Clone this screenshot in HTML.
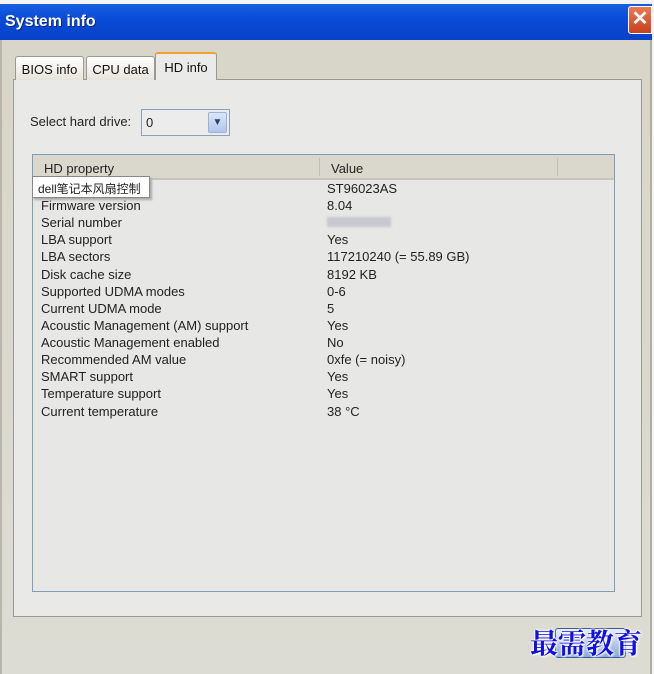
<!DOCTYPE html>
<html><head><style>
*{margin:0;padding:0;box-sizing:border-box}
body{width:654px;height:674px;background:#f4f4f4;font-family:"Liberation Sans","Noto Sans CJK SC",sans-serif;font-size:13px;color:#222;position:relative;overflow:hidden}
.win{position:absolute;left:0;top:4px;width:652px;height:670px;background:linear-gradient(#d8d5c7,#dddcd4);border-left:2px solid #b8b6ac;border-right:2px solid #b0aea4}
.a{position:absolute}
.title{left:0;top:4px;width:652px;height:36px;background:linear-gradient(#1a5fe0,#0a4bd8 40%,#0842c8);}
.title span{position:absolute;left:5px;top:9px;color:#fff;font-weight:bold;font-size:16px;text-shadow:1px 1px #0a2a80}
.close{position:absolute;left:628px;top:6px;width:24px;height:28px;background:linear-gradient(#e87a55,#c8411c);border:1px solid #fff;border-radius:3px 0 0 3px;color:#fff;font-size:20px;line-height:25px;text-align:center;font-weight:bold}
.tab{position:absolute;top:56px;height:24px;background:linear-gradient(#fff,#e6e4dc);border:1px solid #9a9a90;border-bottom:none;border-radius:3px 3px 0 0;font-size:13px;padding:5px 0 0;text-align:center;white-space:nowrap;color:#111}
.panel{left:13px;top:79px;width:629px;height:538px;background:#e9e9e8;border:1px solid #9a9a92}
.list{left:32px;top:154px;width:583px;height:438px;background:#e7e7e6;border:1px solid #7f9db9}
.hdr{position:absolute;left:0;top:0;width:581px;height:25px;background:#dad8cc;border-bottom:2px solid #c8c6ba}
.row{position:absolute;left:8px;height:17px;line-height:17px;color:#222;white-space:nowrap}
.val{position:absolute;left:294px;height:17px;line-height:17px;white-space:nowrap}
</style></head><body>
<div class="win"></div>
<div class="a title"><span>System info</span></div>
<div class="close">✕</div>
<div class="a panel"></div>
<div class="tab" style="left:15px;width:69px">BIOS info</div>
<div class="tab" style="left:86px;width:69px">CPU data</div>
<div class="tab" style="left:155px;top:52px;width:62px;height:28px;background:#eaeae8;border-top:2px solid #f0a030;padding-top:6px">HD info</div>
<div class="a" style="left:30px;top:114px;font-size:13px">Select hard drive:</div>
<div class="a" style="left:141px;top:109px;width:89px;height:27px;background:#ececec;border:1px solid #8aa0b8;font-size:13px;padding:5px 4px">0
 <div style="position:absolute;right:2px;top:2px;width:19px;height:21px;background:linear-gradient(#dbe6f8,#b0c6ee);border:1px solid #9db2d8;border-radius:2px;color:#2a4070;font-size:10px;text-align:center;line-height:19px">▼</div></div>
<div class="a list">
 <div class="hdr"><span style="position:absolute;left:11px;top:6px">HD property</span><span style="position:absolute;left:286px;top:3px;width:1px;height:18px;background:#c0beb2"></span><span style="position:absolute;left:298px;top:6px">Value</span><span style="position:absolute;left:524px;top:3px;width:1px;height:18px;background:#c0beb2"></span></div>
 <div class="val" style="top:25px">ST96023AS</div>
 <div class="row" style="top:42px">Firmware version</div><div class="val" style="top:42px">8.04</div>
 <div class="row" style="top:59px">Serial number</div><div class="val" style="top:59px"><span style="display:inline-block;width:64px;height:10px;background:#c8c8d0;filter:blur(1px)"></span></div>
 <div class="row" style="top:76px">LBA support</div><div class="val" style="top:76px">Yes</div>
 <div class="row" style="top:93px">LBA sectors</div><div class="val" style="top:93px">117210240 (= 55.89 GB)</div>
 <div class="row" style="top:111px">Disk cache size</div><div class="val" style="top:111px">8192 KB</div>
 <div class="row" style="top:128px">Supported UDMA modes</div><div class="val" style="top:128px">0-6</div>
 <div class="row" style="top:145px">Current UDMA mode</div><div class="val" style="top:145px">5</div>
 <div class="row" style="top:162px">Acoustic Management (AM) support</div><div class="val" style="top:162px">Yes</div>
 <div class="row" style="top:179px">Acoustic Management enabled</div><div class="val" style="top:179px">No</div>
 <div class="row" style="top:196px">Recommended AM value</div><div class="val" style="top:196px">0xfe (= noisy)</div>
 <div class="row" style="top:213px">SMART support</div><div class="val" style="top:213px">Yes</div>
 <div class="row" style="top:230px">Temperature support</div><div class="val" style="top:230px">Yes</div>
 <div class="row" style="top:248px">Current temperature</div><div class="val" style="top:248px">38 °C</div>
</div>
<div class="a" style="left:32px;top:176px;width:118px;height:22px;background:#fff;border:1px solid #888;box-shadow:2px 2px 2px #aaa;font-size:12px;padding:3px 5px;color:#222;white-space:nowrap">dell笔记本风扇控制</div>
<div class="a" style="left:555px;top:628px;width:71px;height:30px;background:linear-gradient(#e8eef8,#8aa8d8);border:1px solid #3a5a9a;border-radius:3px"></div>
<div class="a" style="left:530px;top:622px;font-family:'Noto Serif CJK SC','Noto Sans CJK SC',serif;font-weight:bold;font-size:28px;color:#1010e0;text-shadow:0 0 2px #fff,0 0 2px #fff,0 0 2px #fff,1px 1px 2px #fff;white-space:nowrap">最需教育</div>
</body></html>
